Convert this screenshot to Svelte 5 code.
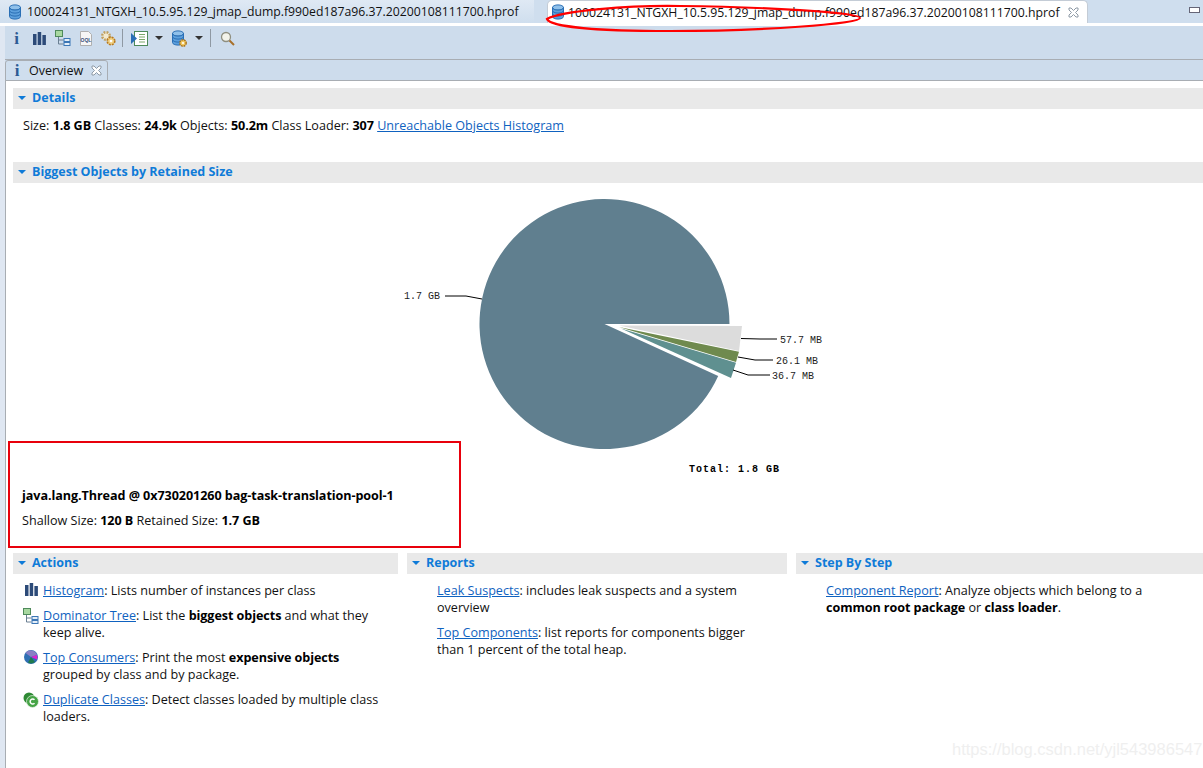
<script>
  const actions = [
    { icon: 'hist', link: 'Histogram', rest: ': Lists number of instances per class' },
    { icon: 'tree', link: 'Dominator Tree', rest: ': List the <b>biggest objects</b> and what they keep alive.' },
    { icon: 'pie', link: 'Top Consumers', rest: ': Print the most <b>expensive objects</b> grouped by class and by package.' },
    { icon: 'dup', link: 'Duplicate Classes', rest: ': Detect classes loaded by multiple class loaders.' }
  ];
  const reports = [
    { link: 'Leak Suspects', rest: ': includes leak suspects and a system overview' },
    { link: 'Top Components', rest: ': list reports for components bigger than 1 percent of the total heap.' }
  ];
  const tabName = '100024131_NTGXH_10.5.95.129_jmap_dump.f990ed187a96.37.20200108111700.hprof';
</script>

{#snippet db()}
  <svg class="db" viewBox="0 0 14 16" width="14" height="16">
    <ellipse cx="7" cy="3.5" rx="5.5" ry="2.6" fill="#8fc0ea" stroke="#2a6fb5" />
    <path d="M1.5 3.5v9c0 1.5 2.5 2.6 5.5 2.6s5.500-1.100 5.500-2.600v-9c0 1.500-2.500 2.600-5.500 2.600S1.500 5 1.500 3.500z" fill="#5c9fdc" stroke="#2a6fb5" />
    <path d="M1.500 6.500c0 1.500 2.500 2.600 5.500 2.600s5.500-1.100 5.500-2.600M1.500 9.500c0 1.500 2.500 2.600 5.500 2.600s5.500-1.100 5.500-2.600" fill="none" stroke="#2a6fb5" />
  </svg>
{/snippet}

{#snippet histIcon()}
  <svg viewBox="0 0 13 13" width="13" height="13"><path d="M0 2h3.500v11H0zM4.700 0h3.500v13H4.700zM9.400 3h3.500v10H9.400z" fill="#2c4a78" /></svg>
{/snippet}

{#snippet treeIcon()}
  <svg viewBox="0 0 16 16" width="16" height="16">
    <rect x=".5" y=".5" width="7" height="6" fill="#a8d8a0" stroke="#4f8a5b" />
    <path d="M3.500 7v7h5M3.500 10h5" fill="none" stroke="#6a7f92" />
    <rect x="9" y="8.500" width="6" height="3" fill="#e4eef8" stroke="#3b76b5" />
    <rect x="9" y="12.500" width="6" height="3" fill="#e4eef8" stroke="#3b76b5" />
  </svg>
{/snippet}

{#snippet pieIcon()}
  <svg viewBox="0 0 14 14" width="14" height="14">
    <circle cx="7" cy="7" r="7" fill="#2f6fb3" />
    <path d="M7 7L1.500 3A6.500 6.500 0 0 1 13 5z" fill="#8a7fc4" />
    <path d="M7 7L13 5A6.500 6.500 0 0 1 13 9.500z" fill="#e020d0" />
    <path d="M7 7L11 12A6.500 6.500 0 0 1 4 12.500z" fill="#1f7a4d" />
  </svg>
{/snippet}

{#snippet dupIcon()}
  <svg viewBox="0 0 16 16" width="16" height="16">
    <circle cx="6" cy="6" r="5.500" fill="#2f8a35" />
    <circle cx="9.500" cy="9.500" r="6" fill="#46a446" stroke="#e9f3e9" stroke-width="0.700" />
    <path d="M11.500 7.800a2.500 2.500 0 1 0 0 3.400" fill="none" stroke="#fff" stroke-width="1.500" />
  </svg>
{/snippet}

{#snippet closeX()}
  <svg class="x" viewBox="0 0 11 11" width="11" height="11"><path d="M1 1h2l2.500 2.500L8 1h2v2L7.500 5.500 10 8v2H8L5.500 7.500 3 10H1V8l2.500-2.500L1 3z" fill="#fff" stroke="#8e9aa6" /></svg>
{/snippet}

<div class="window">
  <div class="tabs">
    <div class="tab">
      {@render db()}
      <span>{tabName}</span>
    </div>
    <div class="tab active">
      {@render db()}
      <span>{tabName}</span>
      {@render closeX()}
    </div>
    <div class="minimize"></div>
  </div>

  <div class="toolbar">
    <span class="tool"><span class="info">i</span></span>
    <span class="tool">{@render histIcon()}</span>
    <span class="tool">{@render treeIcon()}</span>
    <span class="tool"><svg viewBox="0 0 14 15" width="14" height="15"><path d="M1.500 .500h8l3 3v11h-11z" fill="#f6f6f6" stroke="#b0b0b0" /><text x="1.500" y="10.500" class="oql">OQL</text></svg></span>
    <span class="tool"><svg viewBox="0 0 17 17" width="17" height="17">
      <circle cx="6" cy="6" r="3.800" fill="#f3ead0" stroke="#c0a060" stroke-width="2.400" stroke-dasharray="1.800 1.200" />
      <circle cx="11" cy="11" r="3.800" fill="#f0d080" stroke="#b8791f" stroke-width="1.600" stroke-dasharray="2 1" />
      <circle cx="11" cy="11" r="1.300" fill="#fff" />
    </svg></span>
    <i class="sep"></i>
    <span class="tool"><svg viewBox="0 0 17 15" width="17" height="15">
      <rect x="3.500" y=".500" width="13" height="14" fill="#fff" stroke="#4d8a5a" />
      <path d="M8 3.500h6M8 6h6M8 8.500h6M8 11h6" stroke="#7aa86a" />
      <path d="M0 2l6 5.500-6 5.500z" fill="#2a6fb5" />
    </svg></span>
    <i class="caret"></i>
    <span class="tool">
      <span class="db-gear">
        {@render db()}
        <svg class="gear" viewBox="0 0 10 10" width="10" height="10"><circle cx="5" cy="5" r="3.200" fill="#f0c860" stroke="#a8701a" stroke-width="1.400" stroke-dasharray="1.800 .8" /><circle cx="5" cy="5" r="1.100" fill="#fff" /></svg>
      </span>
    </span>
    <i class="caret"></i>
    <i class="sep"></i>
    <span class="tool"><svg viewBox="0 0 15 15" width="15" height="15">
      <circle cx="6" cy="6" r="4.500" fill="#f3f3ea" stroke="#8f8f80" stroke-width="1.300" />
      <path d="M9.500 9.500l4.500 4.500" stroke="#a8702a" stroke-width="2" />
    </svg></span>
  </div>

  <div class="editor-head">
    <div class="editor-tab">
      <span class="info">i</span>
      <span>Overview</span>
      {@render closeX()}
    </div>
  </div>

  <div class="content">
    <section>
      <h2><i class="tri"></i>Details</h2>
      <p class="detail">
        Size: <b>1.8 GB</b> Classes: <b>24.9k</b> Objects: <b>50.2m</b> Class Loader: <b>307</b>
        <a href="#top">Unreachable Objects Histogram</a>
      </p>
    </section>

    <section>
      <h2><i class="tri"></i>Biggest Objects by Retained Size</h2>
      <div class="chart">
        <svg viewBox="0 0 1190 278" width="1190" height="278">
          <g transform="translate(-13 -183)">
            <path d="M604.500 324 L729.500 324 A125 125 0 1 0 718.200 376 Z" fill="#607f8f" />
            <path d="M619 325.500 L742 326 L739 351 Z" fill="#dcdcdc" />
            <path d="M619 327 L739 351.800 L736 362 Z" fill="#6f8a4e" />
            <path d="M621 328.500 L736 362.800 L731 378 Z" fill="#5f9090" />
            <g fill="none" stroke="#000">
              <path d="M482 299L466 296H445" />
              <path d="M741 338.500L760 339H777" />
              <path d="M738 357L755 360H773" />
              <path d="M733 370L748 375H770" />
            </g>
            <g class="plabel">
              <text x="404" y="299">1.7 GB</text>
              <text x="780" y="343">57.7 MB</text>
              <text x="776" y="364">26.1 MB</text>
              <text x="772" y="379">36.7 MB</text>
              <text x="689" y="472" class="total">Total: 1.8 GB</text>
            </g>
          </g>
        </svg>
      </div>
      <div class="selected">
        <p class="obj"><b>java.lang.Thread @ 0x730201260 bag-task-translation-pool-1</b></p>
        <p>Shallow Size: <b>120 B</b> Retained Size: <b>1.7 GB</b></p>
      </div>
    </section>

    <div class="columns">
      <section>
        <h2><i class="tri"></i>Actions</h2>
        <ul class="links">
          {#each actions as a}
            <li>
              <span class="lead">
                {#if a.icon === 'hist'}{@render histIcon()}
                {:else if a.icon === 'tree'}{@render treeIcon()}
                {:else if a.icon === 'pie'}{@render pieIcon()}
                {:else}{@render dupIcon()}{/if}
              </span>
              <span><a href="#top">{a.link}</a>{@html a.rest}</span>
            </li>
          {/each}
        </ul>
      </section>
      <section>
        <h2><i class="tri"></i>Reports</h2>
        <ul class="links">
          {#each reports as r}
            <li><span class="lead"></span><span><a href="#top">{r.link}</a>{r.rest}</span></li>
          {/each}
        </ul>
      </section>
      <section>
        <h2><i class="tri"></i>Step By Step</h2>
        <ul class="links">
          <li><span class="lead"></span><span><a href="#top">Component Report</a>: Analyze objects which belong to a <b>common root package</b> or <b>class loader</b>.</span></li>
        </ul>
      </section>
    </div>
  </div>

  <!-- annotations painted on top of the screenshot -->
  <div class="red-box"></div>
  <svg class="red-ellipse" viewBox="545 0 320 34" width="320" height="34"><path d="M547 19C560 11 630 5 680 6C760 7 860 12 860 18C860 24 760 31 670 31C600 31 550 27 547 19Z" fill="none" stroke="#f00" stroke-width="2.200" /></svg>
  <div class="watermark">https://blog.csdn.net/yjl543986547</div>
</div>

<style>
  :global(body) {
    margin: 0;
    background: #fff;
  }

  .window {
    position: relative;
    width: 1203px;
    height: 768px;
    overflow: hidden;
    font-family: "Open Sans", "Noto Sans", sans-serif;
    font-size: 12.6px;
    color: #111;
    background: #dfe7f2;
  }

  :global(.window b) {
    letter-spacing: -0.07px;
    color: #000;
  }

  .tabs {
    display: flex;
    height: 26px;
    align-items: flex-start;
    background: #cfdeee;
    border-bottom: 3px solid #fff;
    box-sizing: border-box;
  }

  .tab {
    display: flex;
    align-items: center;
    gap: 5px;
    height: 23px;
    width: 534px;
    padding: 0 0 0 8px;
    box-sizing: border-box;
    margin-right: 13px;
    background: linear-gradient(#dfe9f4, #cfdeee);
    font-size: 12.25px;
    white-space: nowrap;
  }

  .tab svg {
    flex-shrink: 0;
  }

  .tab.active {
    width: 541px;
    margin-right: 0;
    padding-left: 3px;
    gap: 3px;
    background: #fff;
    border: 1px solid #c4ccd6;
    border-bottom: 0;
    border-radius: 5px 5px 0 0;
  }

  .tab.active .x {
    margin-left: 5px;
  }

  .minimize {
    position: absolute;
    right: 3px;
    top: 7px;
    width: 9px;
    height: 4px;
    border: 1px solid #667;
    background: #fff;
  }

  .toolbar {
    display: flex;
    align-items: center;
    height: 34px;
    margin-left: 5px;
    padding-bottom: 9px;
    box-sizing: border-box;
    background: #cddcec;
    border-bottom: 1px solid #a8adb3;
  }

  .tool {
    display: flex;
    justify-content: center;
    flex: 0 0 23px;
  }

  .info {
    width: 12px;
    text-align: center;
    font: bold 17px/1 "Liberation Serif", serif;
    color: #2c5a94;
  }

  .oql {
    font: bold 5px "Liberation Sans", sans-serif;
    fill: #34507c;
  }

  .sep {
    width: 1px;
    height: 18px;
    margin: 0 5px 0 2px;
    background: #8f99a3;
  }

  .caret {
    width: 0;
    height: 0;
    margin: 0 5px 0 4px;
    border: 4px solid transparent;
    border-top: 4px solid #333;
    border-bottom: 0;
  }

  .db-gear {
    position: relative;
    display: flex;
    width: 17px;
  }

  .gear {
    position: absolute;
    right: 0;
    bottom: -2px;
  }

  .editor-head {
    height: 21px;
    margin-left: 5px;
    background: #cddcec;
    border-bottom: 1px solid #a8adb3;
    box-sizing: border-box;
  }

  .editor-tab {
    display: flex;
    align-items: center;
    gap: 6px;
    width: 103px;
    height: 21px;
    padding-left: 5px;
    box-sizing: border-box;
    border: 1px solid #a8adb3;
    border-radius: 3px 3px 0 0;
    background: #cfdeee;
    font-size: 12.5px;
  }

  .editor-tab .x {
    margin-left: 2px;
  }

  .content {
    margin-left: 5px;
    height: 687px;
    padding: 7px 0 0 7px;
    box-sizing: border-box;
    background: #fff;
    border-left: 1px solid #a8adb3;
  }

  h2 {
    display: flex;
    align-items: center;
    gap: 6px;
    height: 21px;
    margin: 0;
    padding: 0 0 2px 5px;
    box-sizing: border-box;
    background: #e9e9e9;
    color: #0f7bd8;
    font-size: 12.5px;
    font-weight: 700;
  }

  .tri {
    width: 0;
    height: 0;
    border: 4px solid transparent;
    border-top: 4px solid #0f7bd8;
    border-bottom: 0;
  }

  p {
    margin: 0;
  }

  a {
    color: #0f62c0;
    text-decoration: underline;
  }

  .detail {
    padding: 8px 0 0 10px;
    height: 45px;
    box-sizing: content-box;
    height: 45px;
    line-height: 18px;
  }

  .chart {
    height: 278px;
  }

  .chart svg {
    display: block;
    overflow: visible;
  }

  .plabel text {
    font: 10px "Liberation Mono", monospace;
    fill: #222;
  }

  .plabel .total {
    font-weight: 700;
    letter-spacing: 1px;
    fill: #000;
  }

  .selected {
    height: 92px;
    padding: 26px 0 0 9px;
    box-sizing: border-box;
    line-height: 18px;
  }

  .obj {
    margin-bottom: 7px;
  }

  .columns {
    display: grid;
    grid-template-columns: 385px 380px 1fr;
    gap: 9px;
  }

  .links {
    list-style: none;
    margin: 0;
    padding: 8px 16px 0 10px;
    line-height: 17px;
  }

  .links li {
    display: flex;
    margin-bottom: 8px;
  }

  .lead {
    flex: 0 0 20px;
    box-sizing: border-box;
    display: flex;
    justify-content: center;
    align-items: flex-start;
    padding: 1px 4px 0 0;
  }

  .red-box {
    position: absolute;
    left: 8px;
    top: 441px;
    width: 449px;
    height: 103px;
    border: 2px solid #e8000c;
  }

  .red-ellipse {
    position: absolute;
    left: 545px;
    top: 0;
  }

  .watermark {
    position: absolute;
    left: 952px;
    top: 740px;
    font: 16.5px "Liberation Sans", sans-serif;
    color: #efefef;
  }
</style>
